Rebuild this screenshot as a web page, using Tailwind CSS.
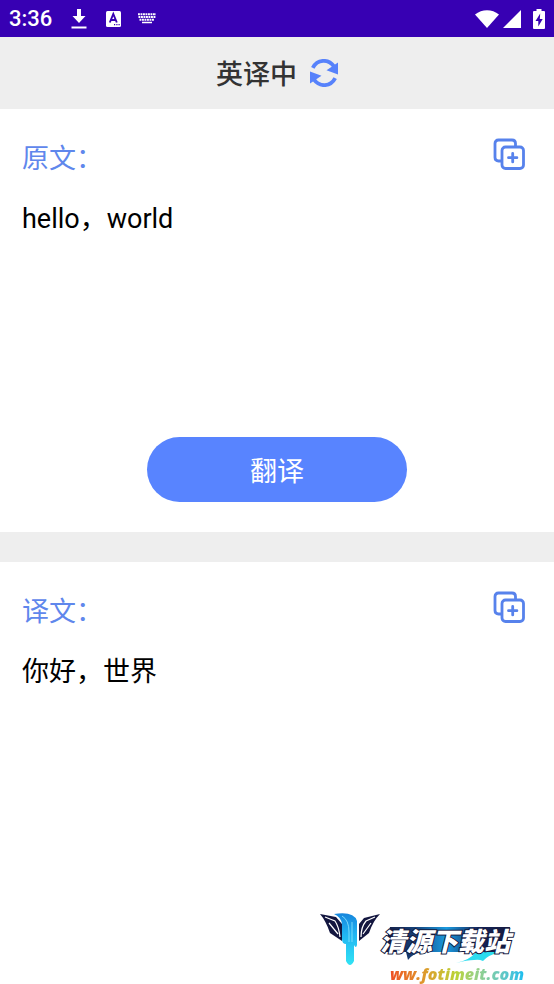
<!DOCTYPE html>
<html lang="zh-CN">
<head>
    <meta charset="UTF-8">
    <meta name="viewport" content="width=device-width, initial-scale=1.0">
    <title>英译中</title>
    <script src="https://cdn.jsdelivr.net/npm/@tailwindcss/browser@4"></script>
</head>
<body class="relative flex min-h-screen flex-col bg-white font-['Noto_Sans_CJK_SC',sans-serif] text-[27px] leading-10 text-black">
    <!-- Status bar -->
    <div class="flex h-[37px] items-center bg-[#3700b3] px-[9px] text-white">
        <span class="w-[62px] font-[Roboto,sans-serif] text-[22px] font-medium leading-6">3:36</span>
        <svg class="h-5 w-4" viewBox="0 0 16 20" fill="currentColor" aria-hidden="true">
            <path d="M6 0h4v7h4.500L8 14 1.500 7H6zM.5 17.500h15v2H.5z"/>
        </svg>
        <svg class="ml-[19px] h-4 w-[15px]" viewBox="0 0 15 16" aria-hidden="true">
            <rect width="15" height="16" rx="1.500" fill="currentColor"/>
            <path d="M3.800 11.500 7.300 3l3.500 8.500M5 9h4.600" fill="none" stroke="#3700b3" stroke-width="1.900"/>
            <path d="M8 13h1.200v1.200H8zM10.300 13h1.200v1.200h-1.200zM12.500 13h1.200v1.200h-1.200z" fill="#3700b3"/>
        </svg>
        <svg class="ml-4 h-[11px] w-5" viewBox="0 0 20 11" fill="none" stroke="currentColor" aria-hidden="true">
            <path d="M1 1.300h18M1.500 4h17M2.500 6.700h15" stroke-width="1.900" stroke-dasharray="1.900 .6"/>
            <path d="M5 9.500h10" stroke-width="1.500"/>
        </svg>
        <svg class="ml-auto h-[18px] w-6" viewBox="0 0 24 18" fill="currentColor" aria-hidden="true">
            <path d="M0 4.500C7-1.300 17-1.300 24 4.500L12 18z"/>
        </svg>
        <svg class="ml-1 h-[18px] w-[18px]" viewBox="0 0 18 18" fill="currentColor" aria-hidden="true">
            <path d="M18 0v18H0z"/>
        </svg>
        <svg class="ml-3 h-5 w-3" viewBox="0 0 12 20" aria-hidden="true">
            <path d="M3.500 0h5v2H11q1 0 1 1v16q0 1-1 1H1q-1 0-1-1V3q0-1 1-1h2.500z" fill="currentColor"/>
            <path d="M7.200 4.500 2.500 12h2.800v5.500L9.700 10H6.800z" fill="#3700b3"/>
        </svg>
    </div>

    <header class="flex h-[72px] items-center justify-center gap-[13px] bg-[#eee]">
        <h1 class="font-medium text-[#333]">英译中</h1>
        <button type="button" aria-label="切换语言" class="text-[#5782fb]">
            <svg class="h-7 w-7" viewBox="0 0 28 28" fill="none" stroke="currentColor" stroke-width="3.800">
                <path d="M2.800 8.800C7.500-.2 18.500-.2 24 7.300M25.200 19.200C20.500 28.200 9.500 28.200 4 20.700"/>
                <path d="M28 3.500V15.500L16.500 11.300zM0 24.500V12.500L11.500 16.700z" fill="currentColor" stroke="none"/>
            </svg>
        </button>
    </header>

    <main class="flex grow flex-col">
        <section class="flex h-[423px] flex-col px-[22px] pt-7">
            <div class="flex items-start justify-between">
                <label for="source-text" class="text-[#5f87ec]">原文：</label>
                <button type="button" aria-label="复制原文" class="mr-[7px] mt-px text-[#5782ec]">
                    <svg class="h-8 w-8" viewBox="0 0 32 32" fill="none" stroke="currentColor" stroke-width="2.800" stroke-linecap="round">
                        <path d="M8.500 23H5.500Q2 23 2 19.500V5.500Q2 2 5.500 2H19q3.500 0 3.500 3.500V8"/>
                        <rect x="9" y="9" width="21.500" height="21.500" rx="3.500"/>
                        <path d="M19.700 15.500v8.400M15.500 19.700h8.400"/>
                    </svg>
                </button>
            </div>
            <textarea id="source-text" class="mt-[22px] w-full grow resize-none font-[Roboto,'Noto_Sans_CJK_SC',sans-serif] outline-none">hello，world</textarea>
            <button type="button" class="mb-[30px] mt-5 h-[65px] w-[260px] shrink-0 self-center rounded-full bg-[#5884ff] text-white">翻译</button>
        </section>

        <section class="grow border-t-[30px] border-[#eee] px-[22px] pt-7">
            <div class="flex items-start justify-between">
                <label for="target-text" class="text-[#5f87ec]">译文：</label>
                <button type="button" aria-label="复制译文" class="mr-[7px] mt-px text-[#5782ec]">
                    <svg class="h-8 w-8" viewBox="0 0 32 32" fill="none" stroke="currentColor" stroke-width="2.800" stroke-linecap="round">
                        <path d="M8.500 23H5.500Q2 23 2 19.500V5.500Q2 2 5.500 2H19q3.500 0 3.500 3.500V8"/>
                        <rect x="9" y="9" width="21.500" height="21.500" rx="3.500"/>
                        <path d="M19.700 15.500v8.400M15.500 19.700h8.400"/>
                    </svg>
                </button>
            </div>
            <output id="target-text" class="mt-5 block">你好，世界</output>
        </section>
    </main>

    <!-- Site watermark -->
    <div class="absolute bottom-0 right-[30px] flex h-[72px] items-start">
        <svg class="h-14 w-[60px]" viewBox="0 0 60 56" aria-hidden="true">
            <defs>
                <linearGradient id="water" x1="0" y1="0" x2="0" y2="1">
                    <stop offset="0" stop-color="#1685dc"/>
                    <stop offset=".4" stop-color="#20b4f2"/>
                    <stop offset="1" stop-color="#32e3f4"/>
                </linearGradient>
            </defs>
            <path d="M0 2 16 5 22 12V29L10 21Q6 9 0 2zM60 2 44 6 39 12V29L49 21Q53 9 60 2z" fill="#13163f"/>
            <path d="M5 5 15 9Q19 15 20 25M9 11 18 22M55 5 46 9Q41 15 41 25M51 11 43 22" fill="none" stroke="#fff" stroke-width="1.200"/>
            <path d="M14 2Q34-1 37 9V33Q36 37 34 33V49Q30 57 26 49V32Q22 32 22 27V12Q21 5 14 2z" fill="url(#water)"/>
            <path d="M22 4Q29 8 29 20V30M32 10V30" fill="none" stroke="#8fe6ff" stroke-width=".8"/>
        </svg>
        <div class="relative mt-2 flex flex-col">
            <svg class="absolute left-0 top-0 h-14 w-[140px]" viewBox="0 0 140 56" aria-hidden="true">
                <defs>
                    <linearGradient id="plate">
                        <stop offset="0" stop-color="#151a3e"/>
                        <stop offset=".25" stop-color="#154079"/>
                        <stop offset=".5" stop-color="#1a9be0"/>
                        <stop offset=".75" stop-color="#14245b"/>
                        <stop offset="1" stop-color="#151a3e"/>
                    </linearGradient>
                </defs>
                <path d="M10 7h120l-5 25H42q-10 2-14 8l-2-8H3z" fill="url(#plate)"/>
                <path d="M76 43q14-3 20-11h24q-12 3-17 9-4-2-9-1-7 0-18 3z" fill="#2bdcef"/>
            </svg>
            <span class="relative mt-1 h-8 text-[26px] font-black italic leading-8 text-white [-webkit-text-stroke:2px_#151a3e] [paint-order:stroke_fill]">清源下载站</span>
            <span class="relative ml-2.5 mt-1.5 bg-linear-to-r from-[#ee4b22] via-[#b9d437] via-50% to-[#14bdf0] bg-clip-text font-['Open_Sans',sans-serif] text-[16px] font-extrabold italic leading-6 text-transparent">ww.fotimeit.com</span>
        </div>
    </div>
</body>
</html>
